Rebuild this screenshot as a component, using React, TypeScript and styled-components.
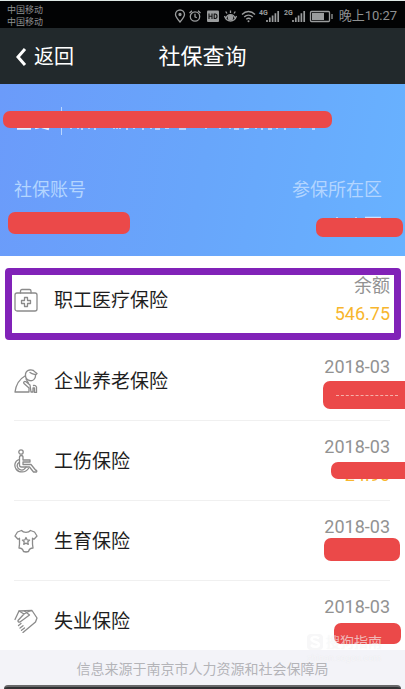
import React from 'react';
import styled, { createGlobalStyle } from 'styled-components';

const GlobalStyle = createGlobalStyle`
  * { box-sizing: border-box; }
  body {
    margin: 0;
    background: #ffffff;
    font-family: Roboto, "Noto Sans CJK SC", sans-serif;
  }
`;

const Screen = styled.div`
  display: flex;
  flex-direction: column;
  height: 100vh;
  overflow: hidden;
  border-top: 1px solid #dfe9e6;
`;

const StatusBar = styled.div`
  flex: none;
  display: flex;
  align-items: center;
  justify-content: space-between;
  height: 27px;
  padding: 0 8px 0 7px;
  background: #020304;
  color: #8f9192;
`;

const Carriers = styled.div`
  font-size: 9px;
  line-height: 12px;
  padding-top: 2px;
`;

const StatusRight = styled.div`
  display: flex;
  align-items: center;
  gap: 6px;
  font-size: 13px;
  line-height: 20px;
  padding-top: 2px;
  white-space: nowrap;
`;

const Header = styled.header`
  flex: none;
  display: grid;
  grid-template-columns: 1fr auto 1fr;
  align-items: center;
  height: 56px;
  padding: 2px 15px 0;
  background: #22292c;
  color: #ffffff;
`;

const BackButton = styled.button`
  display: flex;
  align-items: center;
  justify-self: start;
  gap: 7px;
  padding: 0;
  border: 0;
  background: none;
  color: inherit;
  font: 400 20px/28px Roboto, "Noto Sans CJK SC", sans-serif;
`;

const Title = styled.h1`
  margin: 0;
  font-size: 22px;
  line-height: 32px;
  font-weight: 400;
`;

const Summary = styled.section`
  flex: none;
  position: relative;
  display: flex;
  flex-direction: column;
  justify-content: space-between;
  height: 172px;
  padding: 22px 23px 53px 14px;
  background: linear-gradient(100deg, #6b9bfa 0%, #68a6fb 50%, #68b2ff 100%);
`;

const Fields = styled.div`
  display: flex;
  justify-content: space-between;
  font-size: 18px;
  line-height: 26px;
  color: #b3d5ff;
`;

const List = styled.ul`
  flex: 1;
  min-height: 0;
  margin: 0;
  padding: 4px 15px 0 14px;
  list-style: none;
  overflow: hidden;
  background: #ffffff;
  position: relative;
`;

const Row = styled.li`
  position: relative;
  display: flex;
  align-items: center;
  height: 80px;
  border-bottom: 1px solid #f0f0f0;

  &:first-child {
    height: 81px;
    border-bottom-color: transparent;
  }
`;

const RowIcon = styled.svg`
  flex: none;
  width: 24px;
  height: 24px;
  margin-right: 16px;
  fill: none;
  stroke: #8b8b8b;
  stroke-width: 1.3;
  stroke-linejoin: round;
  stroke-linecap: round;
`;

const Name = styled.span`
  flex: 1;
  padding-top: 2px;
  font-size: 19px;
  line-height: 28px;
  color: #1e1e1e;
`;

const Values = styled.div`
  display: flex;
  flex-direction: column;
  align-items: flex-end;
  font-size: 18px;
  line-height: 28px;
  color: #929292;
`;

const Amount = styled.span`
  color: #f8b62d;
  min-height: 28px;
`;

const Highlight = styled.div`
  position: absolute;
  inset: 8px -11px 0 -9px;
  border: 7px solid #8122b8;
  border-radius: 4px;
`;

const Mask = styled.span<{ $top: number; $right: number; $width: number; $height: number }>`
  position: absolute;
  top: ${p => p.$top}px;
  right: ${p => p.$right}px;
  width: ${p => p.$width}px;
  height: ${p => p.$height}px;
  border-radius: 7px;
  background: #eb4949;
`;

const LongMask = styled.span`
  position: absolute;
  top: 27px;
  left: 3px;
  right: 73px;
  height: 17px;
  border-radius: 7px;
  background: #eb4949;
`;

const AccountMask = styled.span`
  position: absolute;
  top: 128px;
  left: 8px;
  width: 122px;
  height: 22px;
  border-radius: 7px;
  background: #eb4949;
`;

const MaskLine = styled.span`
  position: absolute;
  top: 14px;
  left: 13px;
  width: 62px;
  border-top: 1px dashed #f6b1a9;
`;

const Traces = styled.svg`
  display: block;
  width: 320px;
  height: 30px;
`;

const DistrictTraces = styled.svg`
  position: absolute;
  right: 22px;
  top: 132px;
  width: 54px;
  height: 6px;
`;

const Footer = styled.footer`
  flex: none;
  position: relative;
  display: flex;
  flex-direction: column;
  justify-content: space-between;
  height: 39px;
  padding-top: 9px;
  background: #f3f3f8;
  color: #b4b4b8;
  font-size: 14px;
  line-height: 20px;
  text-align: center;
`;

const BottomEdge = styled.div`
  height: 4px;
  margin: 0 4px;
  border-top: 2px solid #68686a;
  border-radius: 4px 4px 0 0;
  background: #303032;
`;

const Watermark = styled.div`
  position: absolute;
  right: 23px;
  top: -18px;
  display: grid;
  grid-template-columns: 18px auto;
  column-gap: 2px;
  align-items: center;
  color: rgba(255, 255, 255, 0.6);
  font-size: 14px;
  line-height: 20px;
  text-shadow: 0 0 1px rgba(120, 120, 120, 0.12);
`;

const WatermarkLogo = styled.svg`
  width: 18px;
  height: 18px;
`;

const WatermarkSite = styled.span`
  grid-column: 1 / -1;
  font-size: 9px;
  line-height: 12px;
`;

const StatusIcons = () => (
  <svg width="160" height="16" viewBox="0 0 160 16" fill="none" stroke="#9a9c9d" strokeWidth="1.3" aria-hidden="true">
    <path d="M7 14C4 10.500 2.500 8.500 2.500 6.500a4.500 4.500 0 0 1 9 0C11.500 8.500 10 10.500 7 14z" />
    <circle cx="7" cy="6.500" r="1" fill="#9a9c9d" />
    <circle cx="22" cy="8.500" r="4.700" />
    <path d="M22 5.800v3l1.800 1M16.500 5l2.500-2.300M27.500 5L25 2.700" />
    <rect x="34" y="2.500" width="12" height="11.500" rx="1" fill="#9a9c9d" stroke="none" />
    <path d="M36 5.500v5.500M39 5.500v5.500M36 8.200h3M41.200 6v4.500h1c2.400 0 2.400-4.500 0-4.500z" stroke="#111" strokeWidth="1.100" />
    <path d="M51.500 8c1 3 3 5 6 5s5-2 6-5M53 10c1.500-4.500 7.500-4.500 9 0" />
    <circle cx="57.500" cy="9.500" r="2.200" fill="#9a9c9d" />
    <path d="M57.500 5V2.500M54 5.500L52.700 3.500M61 5.500L62.300 3.500" />
    <path d="M69 6.500c3.800-4 9.200-4 13 0M71.200 9c2.600-2.600 6-2.600 8.600 0M73.300 11.300c1.500-1.400 3-1.400 4.500 0" />
    <circle cx="75.500" cy="13.300" r="1" fill="#9a9c9d" stroke="none" />
    <path d="M94 14v-2M96.800 14V9.500M99.600 14V7.500M102.400 14V5.300M105.200 14V3M120 14v-2M122.800 14V9.500M125.600 14V7.500M128.400 14V5.300M131.200 14V3" strokeWidth="1.700" />
    <g fill="#9a9c9d" stroke="none" fontFamily="Roboto, sans-serif" fontWeight="700" fontSize="7">
      <text x="86" y="7">4G</text>
      <text x="111" y="7">2G</text>
    </g>
    <rect x="137.500" y="3.500" width="19" height="10" rx="1" />
    <rect x="139" y="5" width="12" height="7" fill="#9a9c9d" stroke="none" />
    <path d="M159 6v5" />
  </svg>
);

const KitIcon = () => (
  <RowIcon viewBox="0 0 24 24">
    <rect x="1" y="5" width="22" height="18" rx="2" />
    <path d="M6.500 5V3q0-1.500 1.500-1.500h7.500Q17 1.500 17 3v2" />
    <path d="M10.500 9.500h3v3h3v3h-3v3h-3v-3h-3v-3h3z" />
  </RowIcon>
);

const ElderIcon = () => (
  <RowIcon viewBox="0 0 24 24">
    <path d="M11.500 5C12.500 0 19 0 21 3l2 1.500-1.500 1.500c.500 4-3 6.500-6 5.500-2.500-.700-4-2.500-4-5z" />
    <path d="M21.500 5.500c-2.500-.500-3.500-.500-5.500-2" />
    <path d="M11 7C5.500 10 2 16 1 23h14v-4l-5-4.500c-1-1.500.700-2.700 2-1.700l4 3.200 1 7h2v-4h1.500v4.500h2V18q-1-2-3-1.500M12 10l2.500 4" />
  </RowIcon>
);

const WheelchairIcon = () => (
  <RowIcon viewBox="0 0 24 24">
    <circle cx="7" cy="3" r="2.200" />
    <path d="M5.500 8.500q0-2 1.800-2t1.700 2v2.500h7v2H9v2.500h8l4.500 5.500q2 .500 1 2h-3L15.500 18H7.500q-2 0-2-2z" />
    <path d="M5 10.500C.500 12 0 17 2 20c3 4 9.500 4 12.500-.500M5 13.500c-3 2-2 6 1 7.200 2 .800 4.500 0 6-2.700" />
  </RowIcon>
);

const BabyIcon = () => (
  <RowIcon viewBox="0 0 24 24">
    <path d="M7.500 1.500c2 2.500 7 2.500 9 0L20.500 3l2.500 4-3 3.200-1.500-1v6l.5 3.800c-2.500 0-4 1.500-4.500 3.500L12 23l-2.500-.5C9 20.500 7.500 19 5 19l.5-3.800v-6l-1.500 1L1 7l2.500-4z" />
    <path d="M12 8.500l1.100 2.300 2.500.300-1.800 1.700.5 2.500L12 14.100l-2.300 1.200.5-2.500-1.800-1.700 2.500-.300z" />
  </RowIcon>
);

const HandIcon = () => (
  <RowIcon viewBox="0 0 24 24">
    <path d="M1 10.500L5 2 18 1.500 23 9l-1.500 4L9 23.500" />
    <path d="M5 2l5 3 6-3.300M10.500 2l5 4L6 13q-2.200.500-2-1.500L10 5M4.500 16.500l2.500-2M6 19l3-2.300M7.500 21.300l3-2.300" />
  </RowIcon>
);

type Item = {
  name: string;
  Icon: () => React.JSX.Element;
  caption: string;
  amount?: string;
  mask?: { top: number; right: number; width: number; height: number };
  struck?: boolean;
};

const items: Item[] = [
  { name: '职工医疗保险', Icon: KitIcon, caption: '余额', amount: '546.75' },
  { name: '企业养老保险', Icon: ElderIcon, caption: '2018-03', mask: { top: 40, right: -23, width: 90, height: 28 }, struck: true },
  { name: '工伤保险', Icon: WheelchairIcon, caption: '2018-03', amount: '24.90', mask: { top: 41, right: -23, width: 82, height: 17 } },
  { name: '生育保险', Icon: BabyIcon, caption: '2018-03', mask: { top: 37, right: -10, width: 76, height: 23 } },
  { name: '失业保险', Icon: HandIcon, caption: '2018-03', mask: { top: 42, right: -11, width: 67, height: 21 } },
];

export default function App() {
  return (
    <Screen>
      <GlobalStyle />
      <StatusBar>
        <Carriers>
          <div>中国移动</div>
          <div>中国移动</div>
        </Carriers>
        <StatusRight>
          <StatusIcons />
          <span>晚上10:27</span>
        </StatusRight>
      </StatusBar>
      <Header>
        <BackButton type="button">
          <svg width="12" height="20" viewBox="0 0 12 20" fill="none" stroke="#fff" strokeWidth="3" aria-hidden="true">
            <path d="M10 2L3 10l7 8" />
          </svg>
          返回
        </BackButton>
        <Title>社保查询</Title>
      </Header>
      <Summary>
        <Traces viewBox="0 0 320 30" stroke="#cfe2ff" strokeWidth="1.5" fill="none" aria-hidden="true">
          <path d="M3 22.500h14M21 22l4-1M28 21l7 2" strokeWidth="2.500" stroke="#e4efff" />
          <path d="M47.500 1v28" strokeWidth="1" stroke="#b9d6ff" />
          <path d="M57 23v-3m7 3v-3m3 3h2m6 0v-3m5 3h2m8-2v1m10 1v-3m3 3v-3m3 3v-3m6 3h2m6 0v-3m8 3h2m7-2v2m4 0h5m5-1h4m10 1h7m20 0v-3m14 3v-3m10 3v-3m4 3h5m5 0l5-1m7 1v-3m5 3h2m5 0h4m5 0v-3m7 3h2m14 0v-4m12 4h3" />
        </Traces>
        <LongMask />
        <Fields>
          <span>社保账号</span>
          <span>参保所在区</span>
        </Fields>
        <AccountMask />
        <DistrictTraces viewBox="0 0 54 6" stroke="#cfe2ff" strokeWidth="1.5" aria-hidden="true">
          <path d="M8 1v4M27 1v4M36 1.500h16" />
        </DistrictTraces>
        <Mask $top={134} $right={2} $width={87} $height={19} />
      </Summary>
      <List>
        {items.map(({ name, Icon, caption, amount, mask, struck }, index) => (
          <Row key={name}>
            <Icon />
            <Name>{name}</Name>
            <Values>
              <span>{caption}</span>
              <Amount>{amount}</Amount>
            </Values>
            {mask && (
              <Mask $top={mask.top} $right={mask.right} $width={mask.width} $height={mask.height}>
                {struck && <MaskLine />}
              </Mask>
            )}
            {index === 0 && <Highlight />}
          </Row>
        ))}
      </List>
      <Footer>
        <span>信息来源于南京市人力资源和社会保障局</span>
        <BottomEdge />
        <Watermark>
          <WatermarkLogo viewBox="0 0 18 18" fill="none" aria-hidden="true">
            <rect x="1" y="1" width="16" height="16" rx="4" fill="#f7f7f8" />
            <path d="M13 5.500C10 3 5 4 5.500 6.500S13 9 13 11.500 8 15 5 12" stroke="#fff" strokeWidth="2.500" />
          </WatermarkLogo>
          <span>搜狗指南</span>
          <WatermarkSite>zhinan.sogou.com</WatermarkSite>
        </Watermark>
      </Footer>
    </Screen>
  );
}
